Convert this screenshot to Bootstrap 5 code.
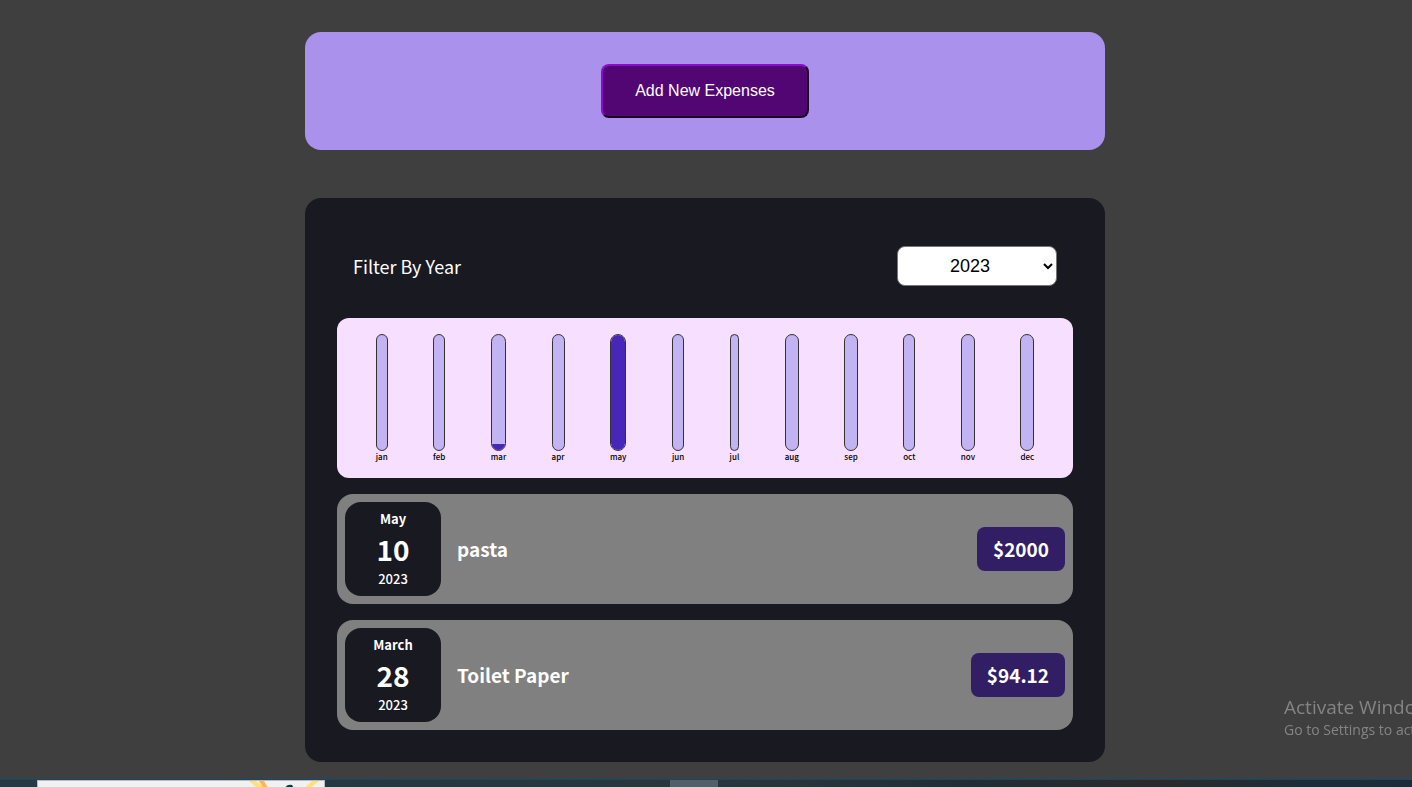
<!DOCTYPE html>
<html lang="en">
<head>
<meta charset="utf-8">
<meta name="viewport" content="width=device-width, initial-scale=1">
<title>Expenses</title>
<link href="https://cdn.jsdelivr.net/npm/bootstrap@5.3.0/dist/css/bootstrap.min.css" rel="stylesheet">
<style>
body { background: #3f3f3f; color: #fff; font-family: "Noto Sans CJK JP", sans-serif; overflow-x: hidden; padding-right: 2px; }
.panel { width: 100%; max-width: 800px; border-radius: 16px; }
.panel-add { background: #a991ec; padding: 32px; }
.panel-list { background: #191921; padding: 32px; }
.add-btn { background: #510674; color: #fff; border: 2px solid; border-color: #8f0bcc #1c0228 #1c0228 #8f0bcc; border-radius: 8px; font: 16px/18px "Liberation Sans", sans-serif; padding: 16px 32px; }
.filter-label { font-size: 18px; line-height: 26px; }
.year-select { width: 160px; height: 40px; border: 1px solid #767676; border-radius: 8px; background: #fff; color: #000; font: 18px/20px "Liberation Sans", sans-serif; padding-right: 2px; text-align: center; text-align-last: center; }
.chart { background: #f7dfff; border-radius: 12px; height: 160px; padding: 16px; color: #000; }
.bar { flex: 1; width: 100%; border: 1px solid #333; border-radius: 12px; background: #c2b4f3; overflow: hidden; }
.bar-fill { background: #4826b9; }
.month { font-size: 8px; line-height: 11px; font-weight: 500; }
.expense { background: #808080; border-radius: 16px; padding: 8px; }
.date-box { width: 96px; height: 94px; background: #191921; border-radius: 16px; }
.date-month { font-size: 13px; line-height: 20px; }
.date-year { font-weight: 500; }
.date-day { font-size: 28px; line-height: 40px; }
.expense-title { font-size: 19px; line-height: 28px; margin: 0; font-weight: 700; }
.price { background: #311e65; border-radius: 8px; font-size: 19px; line-height: 28px; padding: 8px 16px; }
.watermark { right: 0; bottom: 47px; width: 128px; overflow: hidden; white-space: nowrap; color: #848484; font-family: "Open Sans", sans-serif; }
.watermark-title { font-size: 19px; line-height: 26px; }
.watermark-text { font-size: 14px; line-height: 20px; }
.taskbar { height: 8px; border-top: 1px solid #11486c; background: linear-gradient(90deg, #253a42, #27363b 55%, #202d35 68%, #2b2a2b 82%, #1d2d38 92%, #1b2c38); }
.search-box { width: 288px; margin-left: 37px; background: #f2f1f2; border: 1px solid #bbb; border-bottom: 0; }
.task-active { width: 48px; margin-left: 345px; background: #526167; }
</style>
</head>
<body>
<main class="d-flex flex-column align-items-center gap-5 pt-4 pb-4 mt-2">
  <section class="panel panel-add text-center">
    <button type="button" class="add-btn">Add New Expenses</button>
  </section>
  <section class="panel panel-list d-flex flex-column gap-3">
    <div class="d-flex justify-content-between align-items-center p-3">
      <label for="year" class="filter-label">Filter By Year</label>
      <select id="year" class="year-select"><option>2023</option><option>2022</option><option>2021</option></select>
    </div>
    <div class="chart d-flex justify-content-around">
      <div class="d-flex flex-column align-items-center"><div class="bar"></div><div class="month">jan</div></div>
      <div class="d-flex flex-column align-items-center"><div class="bar"></div><div class="month">feb</div></div>
      <div class="d-flex flex-column align-items-center"><div class="bar d-flex flex-column justify-content-end"><div class="bar-fill" style="height:5%"></div></div><div class="month">mar</div></div>
      <div class="d-flex flex-column align-items-center"><div class="bar"></div><div class="month">apr</div></div>
      <div class="d-flex flex-column align-items-center"><div class="bar d-flex flex-column justify-content-end"><div class="bar-fill" style="height:100%"></div></div><div class="month">may</div></div>
      <div class="d-flex flex-column align-items-center"><div class="bar"></div><div class="month">jun</div></div>
      <div class="d-flex flex-column align-items-center"><div class="bar"></div><div class="month">jul</div></div>
      <div class="d-flex flex-column align-items-center"><div class="bar"></div><div class="month">aug</div></div>
      <div class="d-flex flex-column align-items-center"><div class="bar"></div><div class="month">sep</div></div>
      <div class="d-flex flex-column align-items-center"><div class="bar"></div><div class="month">oct</div></div>
      <div class="d-flex flex-column align-items-center"><div class="bar"></div><div class="month">nov</div></div>
      <div class="d-flex flex-column align-items-center"><div class="bar"></div><div class="month">dec</div></div>
    </div>
    <article class="expense d-flex align-items-center gap-3">
      <div class="date-box d-flex flex-column align-items-center justify-content-center">
        <div class="date-month fw-bold">May</div>
        <div class="date-day fw-bold">10</div>
        <div class="date-month date-year">2023</div>
      </div>
      <h2 class="expense-title flex-grow-1">pasta</h2>
      <div class="price fw-bold">$2000</div>
    </article>
    <article class="expense d-flex align-items-center gap-3">
      <div class="date-box d-flex flex-column align-items-center justify-content-center">
        <div class="date-month fw-bold">March</div>
        <div class="date-day fw-bold">28</div>
        <div class="date-month date-year">2023</div>
      </div>
      <h2 class="expense-title flex-grow-1">Toilet Paper</h2>
      <div class="price fw-bold">$94.12</div>
    </article>
  </section>
</main>
<aside class="watermark position-fixed">
  <div class="watermark-title">Activate Windows</div>
  <div class="watermark-text">Go to Settings to activate Windows.</div>
</aside>
<footer class="taskbar fixed-bottom d-flex">
  <div class="search-box d-flex justify-content-end">
    <svg width="76" height="7" viewBox="0 0 76 7" aria-hidden="true">
      <path d="M1 0h7l9 7H9z" fill="#ffe07a"/><path d="M11 0h5l4 7h-5z" fill="#ffb657"/>
      <path d="M37 7q2-4 7-3l2 3z" fill="#153b38"/><path d="M64 0h7q-4 4-10 7h-5z" fill="#ffe07a"/>
    </svg>
  </div>
  <div class="task-active"></div>
</footer>
<script src="https://cdn.jsdelivr.net/npm/bootstrap@5.3.0/dist/js/bootstrap.bundle.min.js"></script>
</body>
</html>
